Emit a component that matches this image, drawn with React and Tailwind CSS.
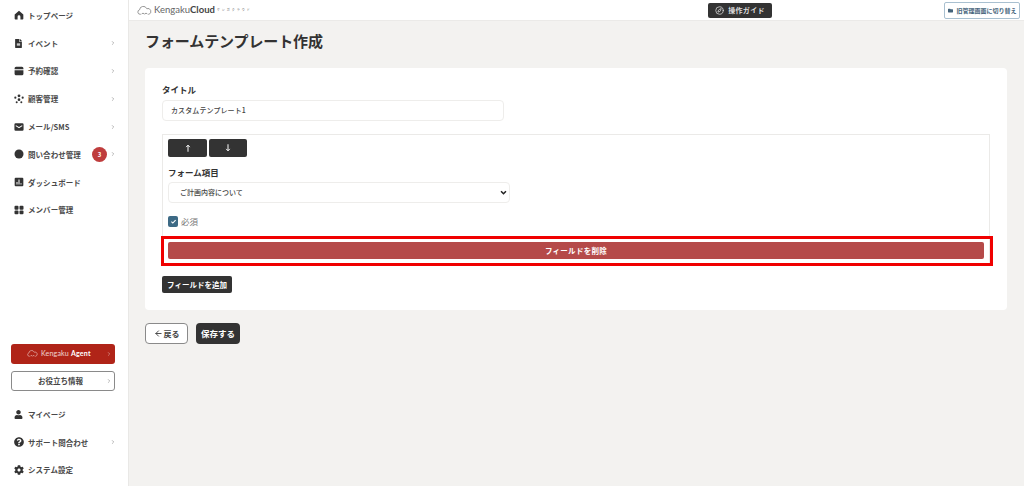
import React from 'react';
import { ChevronRight, ArrowLeft, Compass } from 'lucide-react';
import { FaFileAlt, FaUser, FaQuestionCircle, FaCog, FaFolder } from 'react-icons/fa';

const jp = "font-['Noto_Sans_CJK_JP','Noto_Sans',sans-serif]";

function Glyph({ children, size = 10 }) {
  return (
    <svg viewBox="0 0 12 12" width={size} height={size} fill="currentColor">{children}</svg>
  );
}

const HomeIcon = () => (
  <Glyph><path d="M6 .8.8 5.4v5.2c0 .5.4.9.9.9h2.6V8a1.7 1.7 0 0 1 3.4 0v3.5h2.6c.5 0 .9-.4.9-.9V5.4z" /></Glyph>
);
const CalendarIcon = () => (
  <Glyph><path d="M2.5 1h7A1.8 1.8 0 0 1 11.3 2.8V4H.7V2.8A1.8 1.8 0 0 1 2.5 1z" /><path d="M.7 5h10.6v4.4a1.8 1.8 0 0 1-1.8 1.8h-7A1.8 1.8 0 0 1 .7 9.4z" /></Glyph>
);
const CustomersIcon = () => (
  <Glyph>
    <circle cx="6" cy="2.2" r="1.7" />
    <circle cx="1.6" cy="4.4" r="1.3" />
    <circle cx="10.4" cy="4.4" r="1.3" />
    <circle cx="6" cy="6.8" r="1.6" />
    <circle cx="3.2" cy="10" r="1.2" />
    <circle cx="8.8" cy="10" r="1.2" />
  </Glyph>
);
const MailIcon = () => (
  <Glyph><path fillRule="evenodd" d="M2 1.5h8A1.5 1.5 0 0 1 11.5 3v6A1.5 1.5 0 0 1 10 10.5H2A1.5 1.5 0 0 1 .5 9V3A1.5 1.5 0 0 1 2 1.5zm.4 2.4-.6.9L6 7.4l4.2-2.6-.6-.9L6 6.1z" /></Glyph>
);
const ChatIcon = () => (
  <Glyph><circle cx="6" cy="6" r="5.4" /></Glyph>
);
const ChartIcon = () => (
  <Glyph><path fillRule="evenodd" d="M2 .8h8A1.2 1.2 0 0 1 11.2 2v8A1.2 1.2 0 0 1 10 11.2H2A1.2 1.2 0 0 1 .8 10V2A1.2 1.2 0 0 1 2 .8zM3 6v3h1.2V6zm2.4-3v6h1.2V3zm2.4 4.4V9H9V7.4z" /></Glyph>
);
const MembersIcon = () => (
  <Glyph>
    <rect x="0.6" y="1" width="4.8" height="4.6" rx="1.2" />
    <rect x="6.6" y="1" width="4.8" height="4.6" rx="1.2" />
    <rect x="0.6" y="6.6" width="4.8" height="4.6" rx="1.2" />
    <rect x="6.6" y="6.6" width="4.8" height="4.6" rx="1.2" />
  </Glyph>
);

function CloudLogo({ className }) {
  return (
    <svg viewBox="0 0 20 12" className={className} fill="none" stroke="currentColor" strokeWidth="1">
      <path d="M5 11H4a3 3 0 0 1-.6-5.9A5 5 0 0 1 13 3.6 3.7 3.7 0 0 1 16 11h-1" />
      <path d="M6 11a2.2 2.2 0 0 1 4 0M10 11a2.2 2.2 0 0 1 4 0" />
    </svg>
  );
}

// thin arrow with a small head, like the text arrows on the buttons
function ThinArrow({ down }) {
  return (
    <svg viewBox="0 0 8 10" className={`w-[6px] h-[8px] ${down ? 'rotate-180' : ''}`} fill="none" stroke="#fff" strokeWidth="1.3">
      <path d="M4 10V1.5M1.6 3.8 4 1.2l2.4 2.6" />
    </svg>
  );
}

const topItems = [
  { icon: <HomeIcon />, label: 'トップページ' },
  { icon: <FaFileAlt size={9} />, label: 'イベント', arrow: true },
  { icon: <CalendarIcon />, label: '予約確認', arrow: true },
  { icon: <CustomersIcon />, label: '顧客管理', arrow: true },
  { icon: <MailIcon />, label: 'メール/SMS', arrow: true },
  { icon: <ChatIcon />, label: '問い合わせ管理', arrow: true, badge: 3 },
  { icon: <ChartIcon />, label: 'ダッシュボード' },
  { icon: <MembersIcon />, label: 'メンバー管理' },
];

const bottomItems = [
  { icon: <FaUser size={9} />, label: 'マイページ' },
  { icon: <FaQuestionCircle size={10} />, label: 'サポート問合わせ', arrow: true },
  { icon: <FaCog size={10} />, label: 'システム設定' },
];

function NavItem({ item }) {
  return (
    <div className="flex items-center h-[27.8px] pl-[14px] pr-[12px] text-[#333]">
      <span className="w-[14px] flex justify-start shrink-0">{item.icon}</span>
      <span className="text-[7.5px] font-bold tracking-[0.05px] whitespace-nowrap text-[#4a4a4a]">{item.label}</span>
      <span className="flex-1" />
      {item.badge && (
        <span className="w-[15px] h-[15px] mr-[1px] rounded-full bg-[#bf3d3d] text-white text-[6px] font-bold flex items-center justify-center">{item.badge}</span>
      )}
      {item.arrow && <ChevronRight size={6} className="text-[#777] ml-[2px]" />}
    </div>
  );
}

function Sidebar() {
  return (
    <aside className="w-[129px] shrink-0 h-[486px] bg-white border-r border-[#e9e8e6] flex flex-col justify-between pt-[1.5px] pb-[2px]">
      <nav>
        {topItems.map((item) => <NavItem key={item.label} item={item} />)}
      </nav>
      <div>
        <div className="ml-[11px] w-[104px] h-[20px] rounded-[3px] bg-[#b02418] text-white flex items-center pl-[16px] pr-[3px]">
          <CloudLogo className="w-[11px] h-[7px] mr-[3px] text-white/80" />
          <span className="font-['Lato',sans-serif] text-[7px] tracking-[0.2px] text-white/80 whitespace-nowrap">Kengaku <b className="font-bold text-white">Agent</b></span>
          <span className="flex-1" />
          <ChevronRight size={6} className="text-white/70" />
        </div>
        <div className="ml-[11px] w-[104px] mt-[7px] mb-[10px] h-[20px] rounded-[3px] bg-white border border-[#8a8a8a] flex items-center pr-[2px] text-[#444]">
          <span className="flex-1 text-center text-[7.5px] font-bold pl-[3px]">お役立ち情報</span>
          <ChevronRight size={6} className="text-[#777]" />
        </div>
        {bottomItems.map((item) => <NavItem key={item.label} item={item} />)}
      </div>
    </aside>
  );
}

function Header() {
  return (
    <header className="h-[21px] bg-white border-b border-[#ebeae8] relative flex items-center justify-between pl-[8px] pr-[4px]">
      <div className="flex items-center text-[#777]">
        <CloudLogo className="w-[15px] h-[9px] mr-[2px]" />
        <span className="font-['Lato',sans-serif] text-[9.5px] text-[#666]">Kengaku<b className="font-bold text-[#444]">Cloud</b></span>
        <span className="text-[3px] tracking-[2px] ml-[2px] text-[#555]">ケンガクラウド</span>
      </div>
      <div className="absolute left-[579px] top-[3px] w-[64px] h-[15px] rounded-[2px] bg-[#333] text-[#ddd] flex items-center justify-center gap-[4px]">
        <Compass size={9} />
        <span className="text-[7px] font-bold tracking-[0.3px]">操作ガイド</span>
      </div>
      <div className="h-[17px] w-[76px] rounded-[2px] border border-[#a9c0d0] bg-white text-[#44637a] flex items-center justify-center gap-[3px] mt-[1px] pl-[1px]">
        <FaFolder size={5} />
        <span className="text-[6px] font-bold whitespace-nowrap">旧管理画面に切り替え</span>
      </div>
    </header>
  );
}

function DarkButton({ className, children }) {
  return (
    <button className={`bg-[#333] text-white rounded-[2px] flex items-center justify-center ${className}`}>{children}</button>
  );
}

function FormPanel() {
  return (
    <div className="mt-[13px] w-[828px] h-[132px] border border-[#ebeae8] border-b-0 pl-[5px] pr-[5px] pt-[4px]">
      <div className="flex gap-[2px]">
        <DarkButton className="w-[39px] h-[18px]"><ThinArrow /></DarkButton>
        <DarkButton className="w-[38px] h-[18px]"><ThinArrow down /></DarkButton>
      </div>
      <div className="mt-[9px] text-[8.5px] leading-[12px] font-bold text-[#333]">フォーム項目</div>
      <div className="mt-[4px] w-[342px] h-[21px] rounded-[4px] border border-[#eeedeb] bg-white flex items-center justify-between pl-[11px] pr-[2px]">
        <span className="text-[7px] font-medium text-[#444]">ご計画内容について</span>
        <svg viewBox="0 0 10 10" className="w-[7px] h-[7px]" fill="none" stroke="#222" strokeWidth="2.2"><path d="M1.5 3.2 5 6.8l3.5-3.6" /></svg>
      </div>
      <div className="mt-[12px] flex items-center gap-[3px]">
        <span className="w-[10px] h-[11px] rounded-[2px] bg-[#3d6a85] flex items-center justify-center">
          <svg viewBox="0 0 10 10" className="w-[7px] h-[7px]" fill="none" stroke="#fff" strokeWidth="1.6"><path d="m2 5.2 2 2 4-4.2" /></svg>
        </span>
        <span className="text-[8.5px] text-[#777]">必須</span>
      </div>
      <div className="mt-[14px] h-[17px] w-[816px] rounded-[2px] bg-[#b54a49] text-white text-[7.5px] font-bold tracking-[0.3px] flex items-center justify-center">フィールドを削除</div>
    </div>
  );
}

export default function App() {
  return (
    <div className={`w-[1024px] h-[486px] overflow-hidden flex bg-[#f3f2f0] ${jp}`}>
      <Sidebar />
      <main className="flex-1 min-w-0">
        <Header />
        <div className="pl-[16px] pr-[17px]">
          <h1 className="mt-[9px] text-[15px] leading-[22px] font-bold text-[#333] tracking-[-0.1px]">フォームテンプレート作成</h1>
          <section className="mt-[16px] h-[242px] bg-white rounded-[4px] pt-[15px] pl-[17px] relative">
            <div className="text-[8.5px] leading-[12px] font-bold text-[#333]">タイトル</div>
            <div className="mt-[5px] w-[342px] h-[21px] rounded-[4px] border border-[#eeedeb] flex items-center pl-[8px] text-[7px] font-medium text-[#444] tracking-[0.1px]">カスタムテンプレート1</div>
            <FormPanel />
            {/* red annotation box drawn over the delete row */}
            <div className="absolute left-[16px] top-[168px] w-[832px] h-[30px] border-[3px] border-[#f00000]" />
            <DarkButton className="mt-[10px] w-[70px] h-[17px] text-[7.5px] font-bold">フィールドを追加</DarkButton>
          </section>
          <div className="mt-[13px] flex gap-[8px]">
            <button className="w-[43px] h-[21px] rounded-[4px] bg-white border border-[#8a8a8a] text-[#444] text-[8px] font-bold flex items-center justify-center gap-[1px]">
              <ArrowLeft size={9} strokeWidth={2.5} />戻る
            </button>
            <button className="w-[44px] h-[21px] rounded-[4px] bg-[#333] text-white text-[8.5px] font-bold flex items-center justify-center">保存する</button>
          </div>
        </div>
      </main>
    </div>
  );
}
